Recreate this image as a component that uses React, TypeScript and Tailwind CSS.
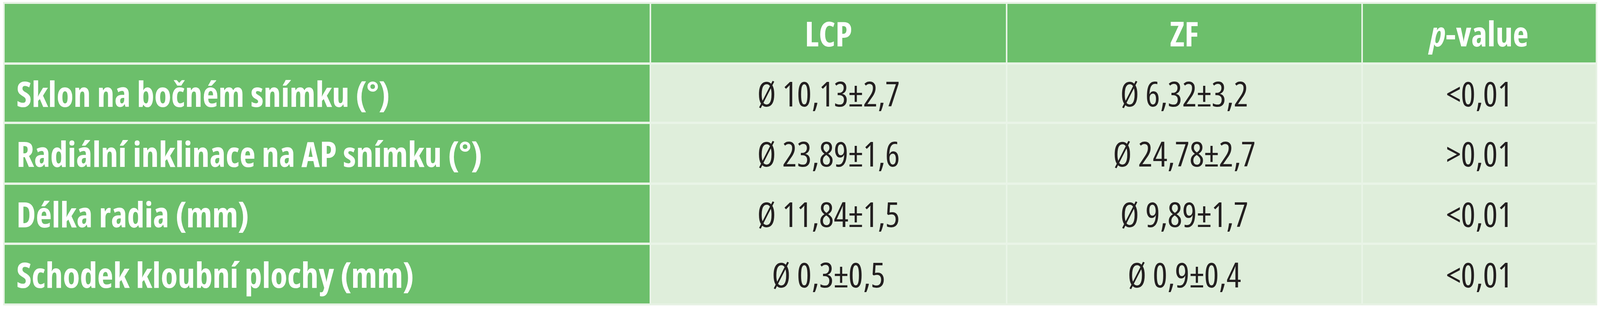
const rows = [
  { label: "Sklon na bočném snímku (°)", lcp: "10,13±2,7", zf: "6,32±3,2", p: "<0,01" },
  { label: "Radiální inklinace na AP snímku (°)", lcp: "23,89±1,6", zf: "24,78±2,7", p: ">0,01" },
  { label: "Délka radia (mm)", lcp: "11,84±1,5", zf: "9,89±1,7", p: "<0,01" },
  { label: "Schodek kloubní plochy (mm)", lcp: "0,3±0,5", zf: "0,9±0,4", p: "<0,01" },
];

function HeadCell({ children }: { children?: React.ReactNode }) {
  return (
    <div className="flex items-center justify-center bg-[#6cbf6b] text-[88px] font-bold text-white font-stretch-[80%]">
      {children}
    </div>
  );
}

function ValueCell({ children }: { children: React.ReactNode }) {
  return (
    <div className="flex items-center justify-center bg-[#dfeedb] text-[88px] text-[#231f20] font-stretch-[82%]">
      {children}
    </div>
  );
}

export default function App() {
  return (
    <div className="h-[800px] w-full bg-white pl-[8px] pr-[7px] pt-[5px] font-['Open_Sans',sans-serif] leading-none">
      <div className="grid w-full grid-cols-[minmax(0,2027fr)_minmax(0,1114fr)_minmax(0,1112fr)_minmax(0,732fr)] grid-rows-[150px_146px_150px_148px_150px] gap-x-[4px] gap-y-[6px] border-x-[4px] border-y-[5px] border-[#e7f2e4] bg-[#e9f4e7]">
        <HeadCell />
        <HeadCell>LCP</HeadCell>
        <HeadCell>ZF</HeadCell>
        <HeadCell>
          <span className="italic">p</span>-value
        </HeadCell>

        {rows.map((r) => (
          <div key={r.label} className="contents">
            <div className="flex items-center bg-[#6cbf6b] pl-[30px] text-[89px] font-bold text-white font-stretch-[82%]">
              {r.label}
            </div>
            <ValueCell>Ø {r.lcp}</ValueCell>
            <ValueCell>Ø {r.zf}</ValueCell>
            <ValueCell>{r.p}</ValueCell>
          </div>
        ))}
      </div>
    </div>
  );
}
